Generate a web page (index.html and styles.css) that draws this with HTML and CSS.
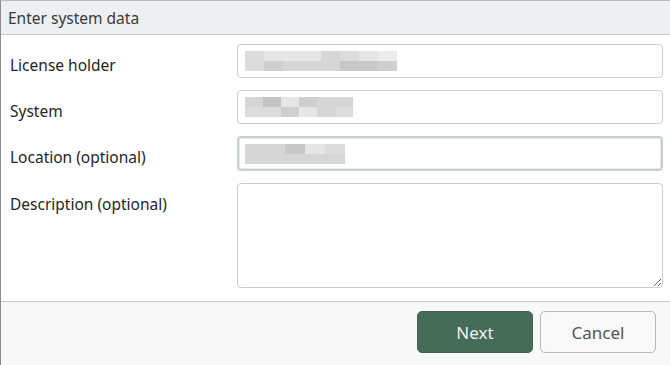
FILE: index.html
```html
<!DOCTYPE html>
<html>
<head>
<meta charset="utf-8">
<link rel="stylesheet" href="styles.css">
</head>
<body>
<div class="dialog">
  <div class="header">Enter system data</div>
  <div class="content">
    <div class="row">
      <label class="label">License holder</label>
      <div class="input">
        <div class="mosaic m1">
          <span class="px a"></span><span class="px e"></span><span class="px e"></span><span class="px e"></span><span class="px b"></span><span class="px a"></span><span class="px e"></span><span class="px f"></span>
          <span class="px a"></span><span class="px k"></span><span class="px b"></span><span class="px b"></span><span class="px b"></span><span class="px d"></span><span class="px d"></span><span class="px k"></span>
        </div>
      </div>
    </div>
    <div class="row">
      <label class="label">System</label>
      <div class="input">
        <div class="mosaic m2">
          <span class="px b"></span><span class="px g"></span><span class="px e"></span><span class="px k"></span><span class="px b"></span><span class="px b"></span>
          <span class="px a"></span><span class="px a"></span><span class="px k"></span><span class="px e"></span><span class="px b"></span><span class="px a"></span>
        </div>
      </div>
    </div>
    <div class="row">
      <label class="label">Location (optional)</label>
      <div class="input focus">
        <div class="mosaic m3">
          <span class="px b"></span><span class="px b"></span><span class="px d"></span><span class="px e"></span><span class="px a"></span>
          <span class="px b"></span><span class="px b"></span><span class="px b"></span><span class="px b"></span><span class="px b"></span>
        </div>
      </div>
    </div>
    <div class="row">
      <label class="label">Description (optional)</label>
      <textarea class="area"></textarea>
    </div>
  </div>
  <div class="footer">
    <button class="btn primary">Next</button>
    <button class="btn secondary">Cancel</button>
  </div>
</div>
</body>
</html>
```
FILE: styles.css
```css
html, body {
  margin: 0;
  padding: 0;
  background: #ffffff;
}
body {
  font-family: "Noto Sans", "Open Sans", sans-serif;
  color: #2b2b2b;
}
.dialog {
  width: 670px;
  height: 365px;
  box-sizing: border-box;
  border-left: 1px solid #8c8c8c;
  border-top: 1px solid #b9bdc0;
  display: flex;
  flex-direction: column;
  overflow: hidden;
}
.header {
  height: 34px;
  box-sizing: border-box;
  background: #ecf0f2;
  border-bottom: 1px solid #c6cacd;
  padding-left: 7px;
  font-size: 15.5px;
  line-height: 34px;
  color: #3a3a3a;
}
.content {
  display: flex;
  flex-direction: column;
  gap: 12px;
  padding: 9px 6px 13px 9px;
  border-bottom: 1px solid #c9c9c9;
}
.row {
  display: flex;
  align-items: flex-start;
}
.label {
  width: 227px;
  padding-top: 10px;
  font-size: 15.5px;
  line-height: 22px;
  color: #262626;
}
.input {
  width: 426px;
  height: 34px;
  box-sizing: border-box;
  border: 1px solid #cdcdcd;
  border-radius: 4px;
  display: flex;
  align-items: center;
  padding-left: 7px;
}
.input.focus {
  height: 35px;
  border: 2px solid #c4d2cd;
  padding-left: 6px;
  box-shadow: inset 0 0 0 1px #e3ebe8;
}
.area {
  width: 426px;
  height: 105px;
  box-sizing: border-box;
  border: 1px solid #cdcdcd;
  border-radius: 4px;
  margin: 0;
  resize: both;
  font-family: inherit;
}
.mosaic {
  display: grid;
  grid-auto-rows: 10px;
  filter: blur(0.6px);
}
.m1 { grid-template-columns: repeat(8, 19px); }
.m2 { grid-template-columns: repeat(6, 18px); }
.m3 { grid-template-columns: repeat(5, 20px); }
.px { display: block; }
.a { background: #dcdcdc; }
.b { background: #d6d6d6; }
.k { background: #cfcfcf; }
.d { background: #c8c8c8; }
.e { background: #e6e6e6; }
.f { background: #ececec; }
.g { background: #c3c3c3; }
.footer {
  flex: 1;
  background: #f8f8f8;
  display: flex;
  justify-content: flex-end;
  align-items: flex-start;
  gap: 7px;
  padding: 9px 14px 0 0;
}
.btn {
  width: 116px;
  height: 42px;
  box-sizing: border-box;
  border-radius: 5px;
  font-family: "Noto Sans", "Open Sans", sans-serif;
  font-size: 17px;
  cursor: pointer;
}
.primary {
  background: #466c59;
  border: 1px solid #3f6452;
  color: #eef3ef;
}
.secondary {
  background: #f9f9f9;
  border: 1px solid #b9b9b9;
  color: #555555;
}
```
